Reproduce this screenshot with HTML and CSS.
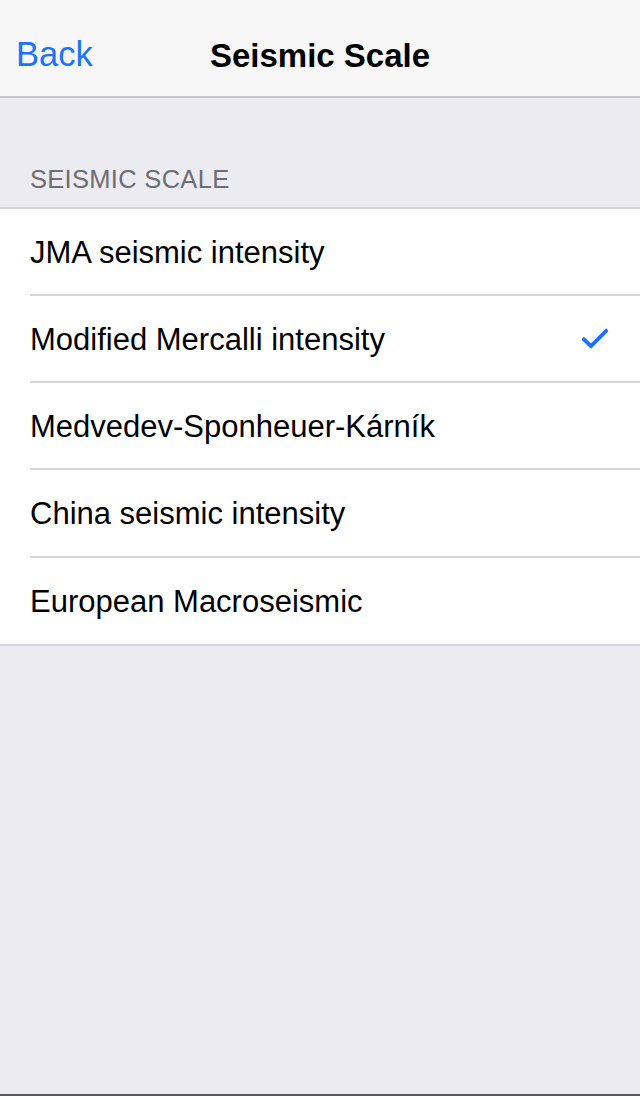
FILE: index.html
```html
<!DOCTYPE html>
<html>
<head>
<meta charset="utf-8">
<link rel="stylesheet" href="styles.css">
</head>
<body>
<div class="screen">
  <header class="navbar">
    <span class="back">Back</span>
    <span class="title">Seismic Scale</span>
  </header>
  <div class="section-header">SEISMIC SCALE</div>
  <ul class="table">
    <li class="row"><span class="label">JMA seismic intensity</span></li>
    <li class="row"><span class="label">Modified Mercalli intensity</span>
      <svg class="check" width="26" height="22" viewBox="0 0 26 22"><path d="M2 11.5 L9 18 L24 3" fill="none" stroke="#1a73ff" stroke-width="3.8" stroke-linecap="square" stroke-linejoin="miter"/></svg>
    </li>
    <li class="row"><span class="label">Medvedev-Sponheuer-Kárník</span></li>
    <li class="row"><span class="label">China seismic intensity</span></li>
    <li class="row"><span class="label">European Macroseismic</span></li>
  </ul>
  <div class="filler"></div>
</div>
</body>
</html>
```

FILE: styles.css
```css
html, body {
  margin: 0;
  padding: 0;
}
body {
  font-family: "Liberation Sans", Arial, sans-serif;
  background: #ecebf2;
}
.screen {
  width: 640px;
  height: 1096px;
  display: flex;
  flex-direction: column;
  background: #ecebf2;
  border-bottom: 2px solid #5a5a5e;
  box-sizing: border-box;
}
.navbar {
  height: 98px;
  flex: none;
  background: #f7f7f7;
  border-bottom: 2px solid #c8c7cc;
  box-sizing: border-box;
  position: relative;
  display: flex;
  align-items: center;
  justify-content: center;
  padding-top: 16px;
}
.back {
  position: absolute;
  left: 16px;
  top: 34px;
  font-size: 34.5px;
  line-height: 40px;
  color: #1a73ff;
}
.title {
  font-size: 33px;
  font-weight: bold;
  color: #000;
  line-height: 40px;
}
.section-header {
  flex: none;
  padding: 66px 30px 13px;
  font-size: 25.5px;
  letter-spacing: 0.3px;
  color: #6d6d72;
  line-height: 30px;
}
.table {
  flex: none;
  list-style: none;
  margin: 0;
  padding: 0;
  background: #fff;
  border-top: 2px solid #d6d5da;
  border-bottom: 2px solid #d6d5da;
}
.row {
  height: 87px;
  margin-left: 30px;
  padding-right: 32px;
  padding-top: 2px;
  display: flex;
  align-items: center;
  justify-content: space-between;
  border-bottom: 2px solid #d6d5da;
  box-sizing: border-box;
}
.row:nth-child(4) {
  height: 88px;
}
.row:last-child {
  border-bottom: none;
  height: 86px;
}
.label {
  font-size: 31px;
  color: #000;
}
.check {
  display: block;
  margin-top: -2px;
}
.filler {
  flex: 1;
}
```
